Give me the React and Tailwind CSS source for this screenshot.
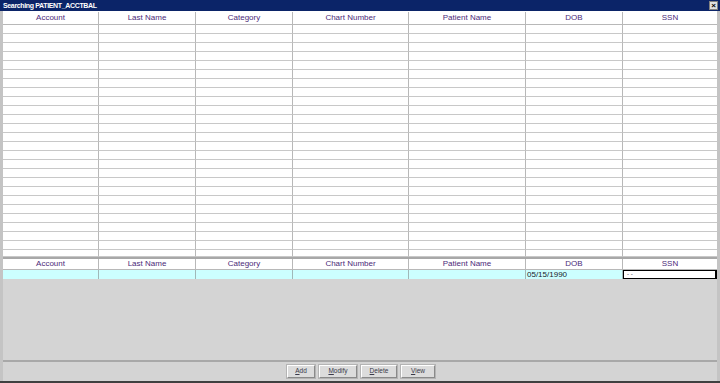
import React from "react";

const columns = ["Account", "Last Name", "Category", "Chart Number", "Patient Name", "DOB", "SSN"];
const gridCols = "grid grid-cols-[96px_97px_97px_116px_117px_97px_1fr]";

const HeaderRow = ({ top }) => (
    <div className={`${gridCols} ${top ? "h-[14px] pt-[1px]" : "h-[13px] border-t-2 border-[#a8a8a8]"} bg-white`}>
        {columns.map((c, i) => (
            <div
                key={c}
                className={`flex items-center justify-center text-[8px] leading-none text-[#4b2a78] border-b border-[#b8b8b8] ${i < 6 ? "border-r" : ""}`}
            >
                {c}
            </div>
        ))}
    </div>
);

const Btn = ({ label, w }) => (
    <button className={`${w} h-[13px] bg-[#dcdcdc] border border-t-white border-l-white border-r-[#8a8a8a] border-b-[#8a8a8a] shadow-[0_0_0_1px_#b4b4b4] text-[6.5px] leading-none text-[#3a3a4a] flex items-center justify-center`}>
        <span className="underline">{label[0]}</span>
        {label.slice(1)}
    </button>
);

export default function App() {
    const rows = Array.from({ length: 26 });

    return (
        <div className="w-[720px] h-[383px] flex flex-col bg-[#d4d4d4] overflow-hidden" style={{ fontFamily: "'Liberation Sans', Arial, sans-serif" }}>
            {/* title bar */}
            <div className="h-[11px] bg-[#0b2468] flex items-center justify-between pl-[3px] pr-[2px]">
                <span className="text-[7px] font-bold text-white leading-none tracking-[-0.35px]">Searching PATIENT_ACCTBAL</span>
                <div className="w-[9px] h-[9px] bg-[#e0e0e0] border border-[#808080] flex items-center justify-center text-[8px] font-bold leading-none text-black">×</div>
            </div>

            <div className="flex-1 flex flex-col border-l-[3px] border-r-[3px] border-[#c4c4c4]">
                {/* results grid */}
                <HeaderRow top />
                <div className="bg-white">
                    {rows.map((_, r) => (
                        <div key={r} className={`${gridCols} ${r === 25 ? "h-[7px]" : "h-[9px]"}`}>
                            {columns.map((c, i) => (
                                <div key={c} className={`border-b border-[#c8c8c8] ${i < 6 ? "border-r border-r-[#b8b8b8]" : ""}`} />
                            ))}
                        </div>
                    ))}
                </div>

                {/* search criteria */}
                <HeaderRow />
                <div className={`${gridCols} h-[9px] bg-[#ccffff]`}>
                    {columns.map((c, i) => (
                        <div key={c} className={`${i < 6 ? "border-r border-[#a0b8b8]" : ""} text-[8px] leading-[9px] text-[#1a1a2a]`}>
                            {c === "DOB" && <span className="pl-[1px]">05/15/1990</span>}
                            {c === "SSN" && (
                                <div className="h-[9px] bg-white border border-black border-r-[2px] text-[6px] leading-[6px] pl-[3px]">- -</div>
                            )}
                        </div>
                    ))}
                </div>

                <div className="flex-1" />

                {/* button bar */}
                <div className="h-[21px] border-t-2 border-t-[#a8a8a8] flex items-center justify-center gap-[4px] pb-[1px] pl-[2px]">
                    <Btn label="Add" w="w-[28px]" />
                    <Btn label="Modify" w="w-[38px]" />
                    <Btn label="Delete" w="w-[36px]" />
                    <Btn label="View" w="w-[34px]" />
                </div>
            </div>
            <div className="h-[2px] bg-[#404040]" />
        </div>
    );
}
